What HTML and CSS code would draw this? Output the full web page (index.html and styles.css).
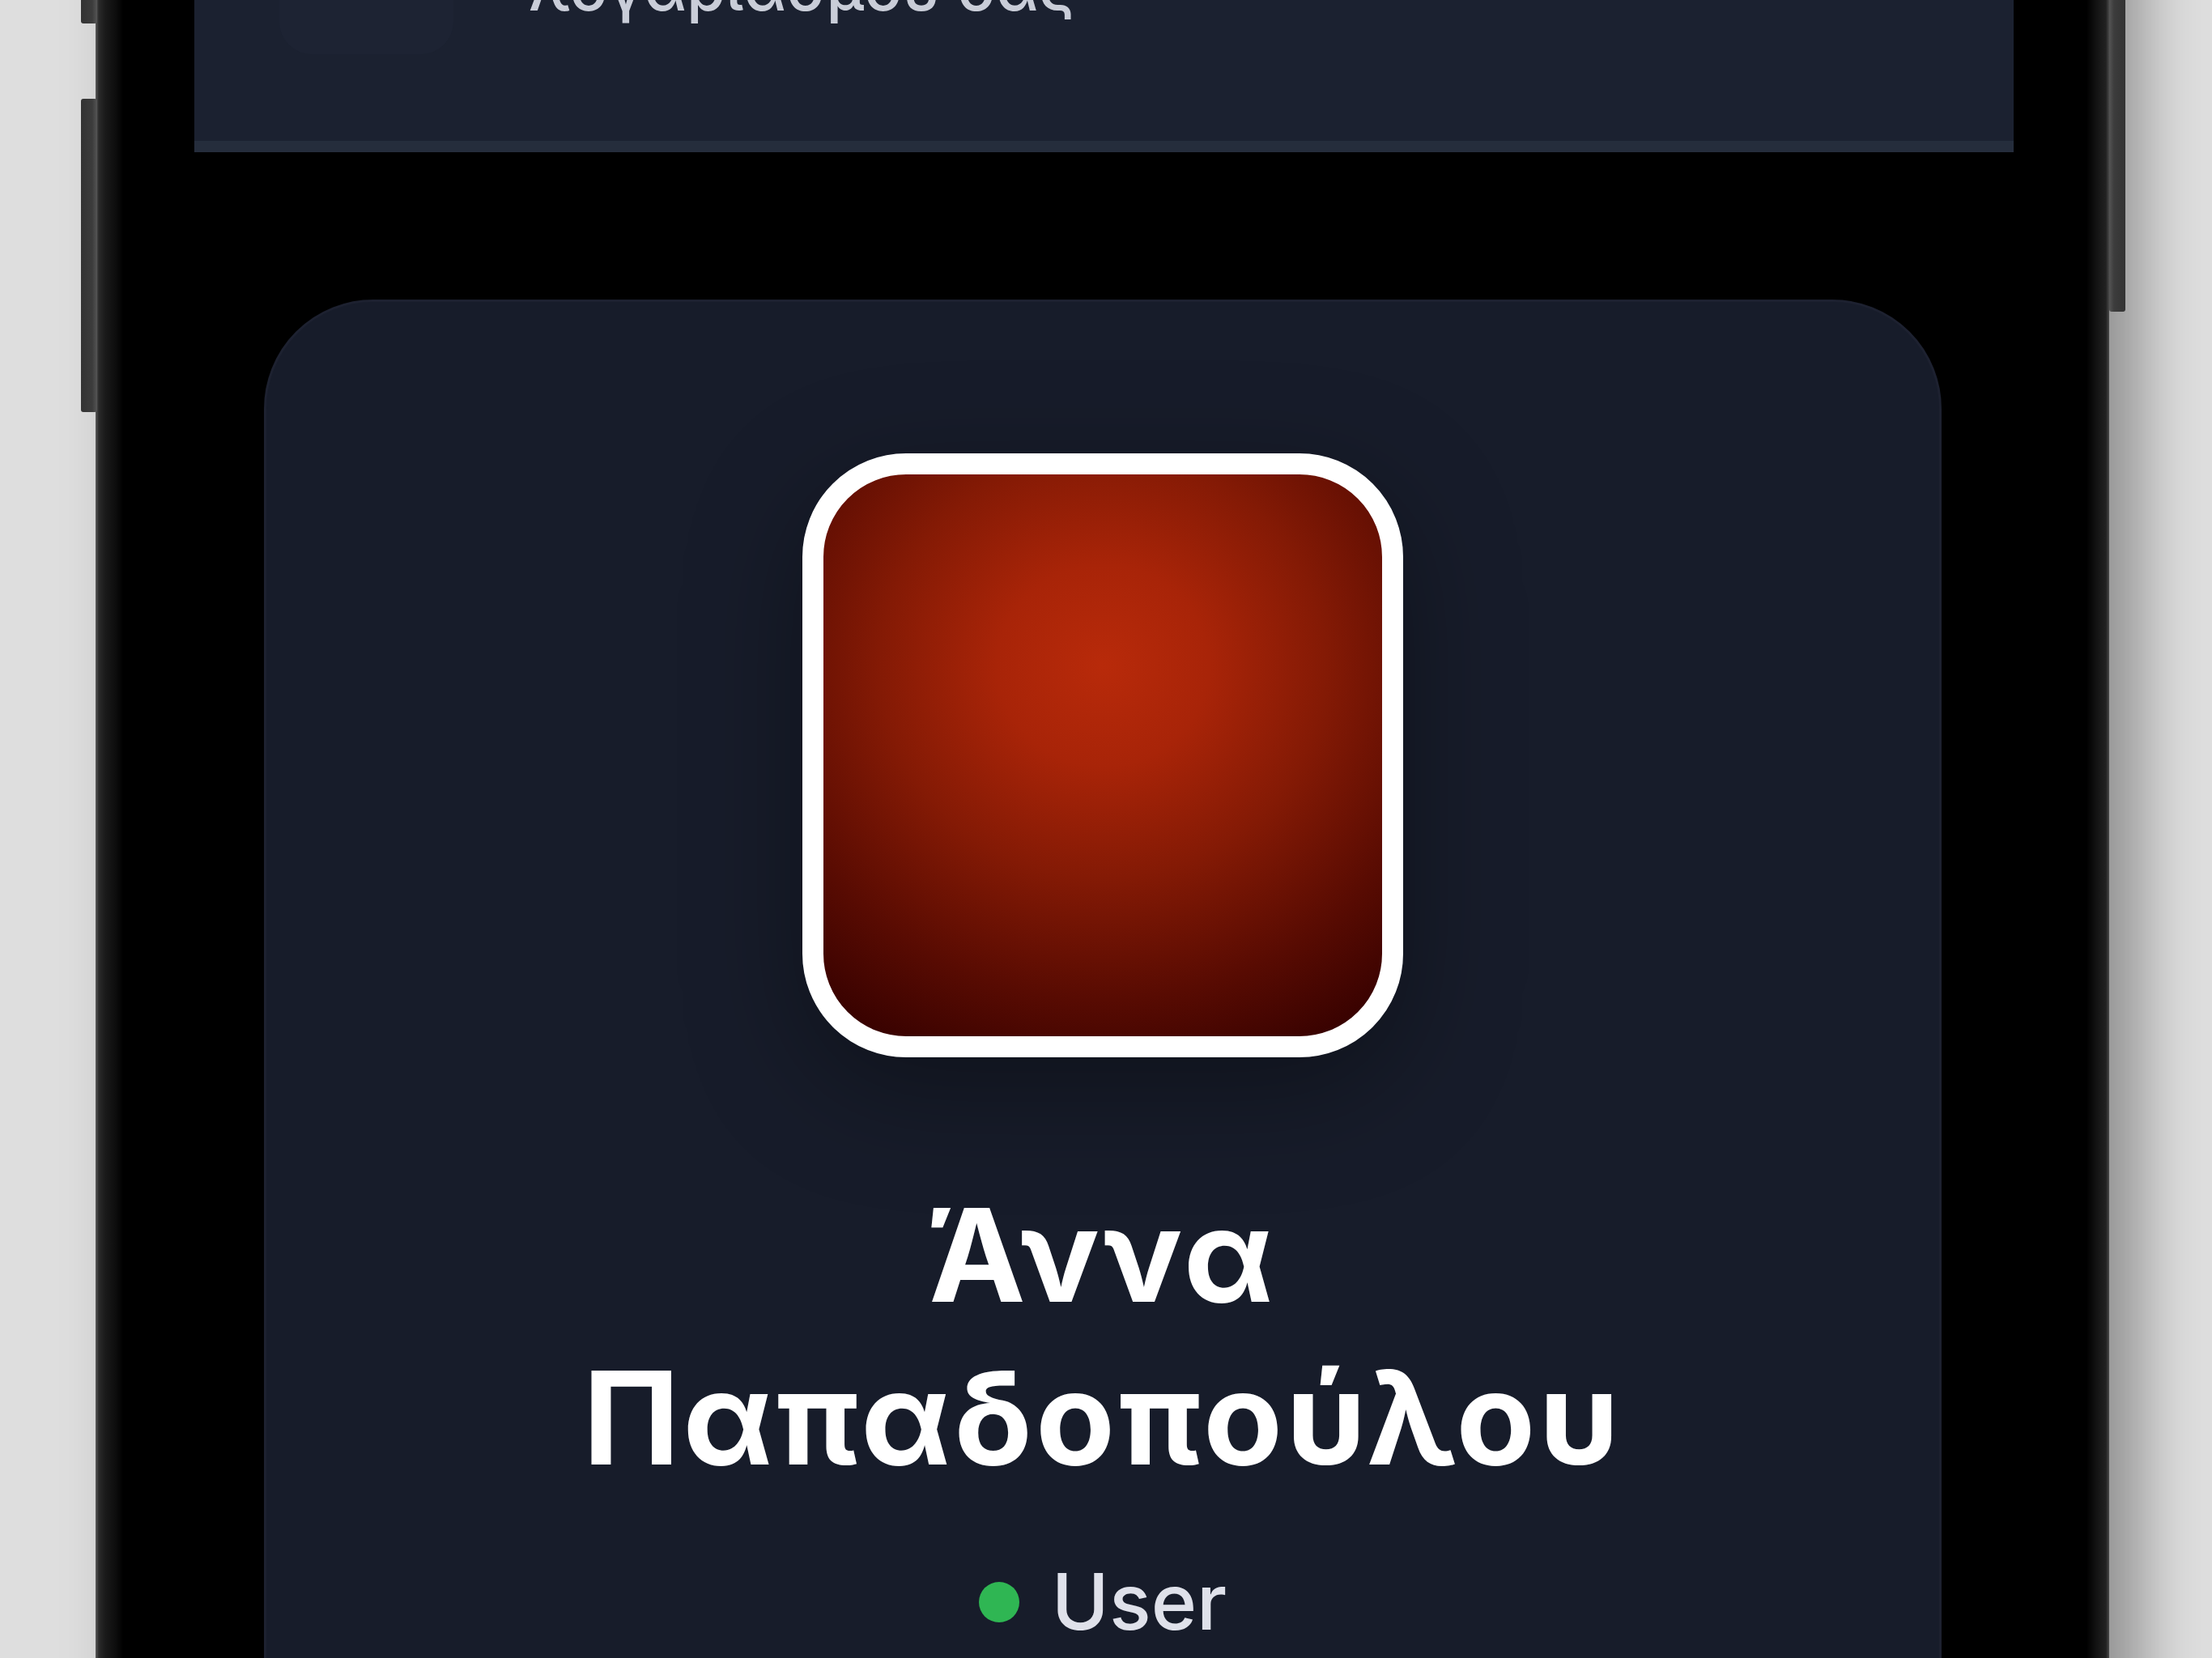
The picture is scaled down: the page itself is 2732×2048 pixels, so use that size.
FILE: index.html
```html
<!DOCTYPE html>
<html lang="el">
<head>
<meta charset="utf-8">
<title>Προφίλ</title>
<link rel="stylesheet" href="styles.css">
</head>
<body>
<div class="stage">
  <div class="phone">
    <span class="btn btn-l1"></span>
    <span class="btn btn-l2"></span>
    <span class="btn btn-r1"></span>
    <div class="screen">
      <section class="info-card">
        <div class="info-row">
          <div class="info-icon"></div>
          <div class="info-text">
            <div class="info-desc">λογαριασμού σας</div>
          </div>
        </div>
      </section>
      <section class="profile-card">
        <div class="avatar"></div>
        <h1 class="name">Άννα<br>Παπαδοπούλου</h1>
        <div class="role"><span class="dot"></span><span class="role-text">User</span></div>
      </section>
    </div>
  </div>
</div>
</body>
</html>
```
FILE: styles.css
```css
html, body {
  margin: 0;
  padding: 0;
  width: 2732px;
  height: 2048px;
  overflow: hidden;
  background: #dedede;
  font-family: Inter, "Noto Sans", "Liberation Sans", sans-serif;
}

.stage {
  padding-left: 118px;
}

.phone {
  position: relative;
  width: 2487px;
  height: 2600px;
  margin-top: -300px;
  background: linear-gradient(to right, #5a5a5a 0, #2a2a2a 4px, #1a1a1a 12px, #0c0c0c 26px, #000 34px, #000 calc(100% - 28px), #151515 calc(100% - 14px), #222 calc(100% - 4px), #4a4a4a 100%);
  box-shadow: 40px 0 70px rgba(0, 0, 0, 0.35);
}

.btn {
  position: absolute;
  width: 20px;
  background: linear-gradient(to right, #333 0, #3c3c3c 70%, #555 100%);
  border-radius: 3px;
}
.btn-l1 { left: -18px; top: 0; height: 329px; }
.btn-l2 { left: -18px; top: 422px; height: 387px; }
.btn-r1 { right: -20px; top: 0; height: 685px; background: linear-gradient(to right, #555 0, #3c3c3c 30%, #333 100%); }

.screen {
  padding: 0 118px 0 122px;
  display: flex;
  flex-direction: column;
}

.info-card {
  box-sizing: border-box;
  height: 488px;
  background: #1b2130;
  border-bottom: 14px solid #252d3c;
  display: flex;
  align-items: flex-end;
  padding: 0 0 107px 105px;
}

.info-row {
  display: flex;
  align-items: flex-end;
  gap: 93px;
}

.info-icon {
  width: 215px;
  height: 215px;
  border-radius: 40px;
  background: #1d2333;
}

.info-text {
  margin-bottom: 27px;
  display: flex;
  flex-direction: column;
}

.info-desc {
  font-size: 78px;
  line-height: 110px;
  font-weight: 500;
  color: #c9cdd8;
  white-space: nowrap;
}

.profile-card {
  margin: 182px 89px 0 86px;
  height: 2000px;
  background: #171c2a;
  border: 3px solid #1d2130;
  border-radius: 135px;
  display: flex;
  flex-direction: column;
  align-items: center;
  padding-top: 187px;
}

.avatar {
  box-sizing: border-box;
  width: 742px;
  height: 746px;
  border: 26px solid #ffffff;
  border-radius: 128px;
  background: radial-gradient(ellipse 95% 90% at 50% 34%, #b82a0a 0%, #a82408 20%, #841a05 42%, #580b02 66%, #320000 88%, #2a0000 100%);
  box-shadow: 0 40px 140px rgba(0, 0, 0, 0.35);
}

.name {
  margin: 144px 0 0;
  font-size: 160px;
  line-height: 201px;
  letter-spacing: 4px;
  font-weight: 700;
  color: #ffffff;
  text-align: center;
}

.role {
  margin-top: 69px;
  display: flex;
  align-items: center;
  gap: 40px;
}

.dot {
  width: 50px;
  height: 50px;
  border-radius: 50%;
  background: #2fb653;
}

.role-text {
  font-size: 96px;
  line-height: 115px;
  font-weight: 500;
  color: #dfe1ea;
}
```
